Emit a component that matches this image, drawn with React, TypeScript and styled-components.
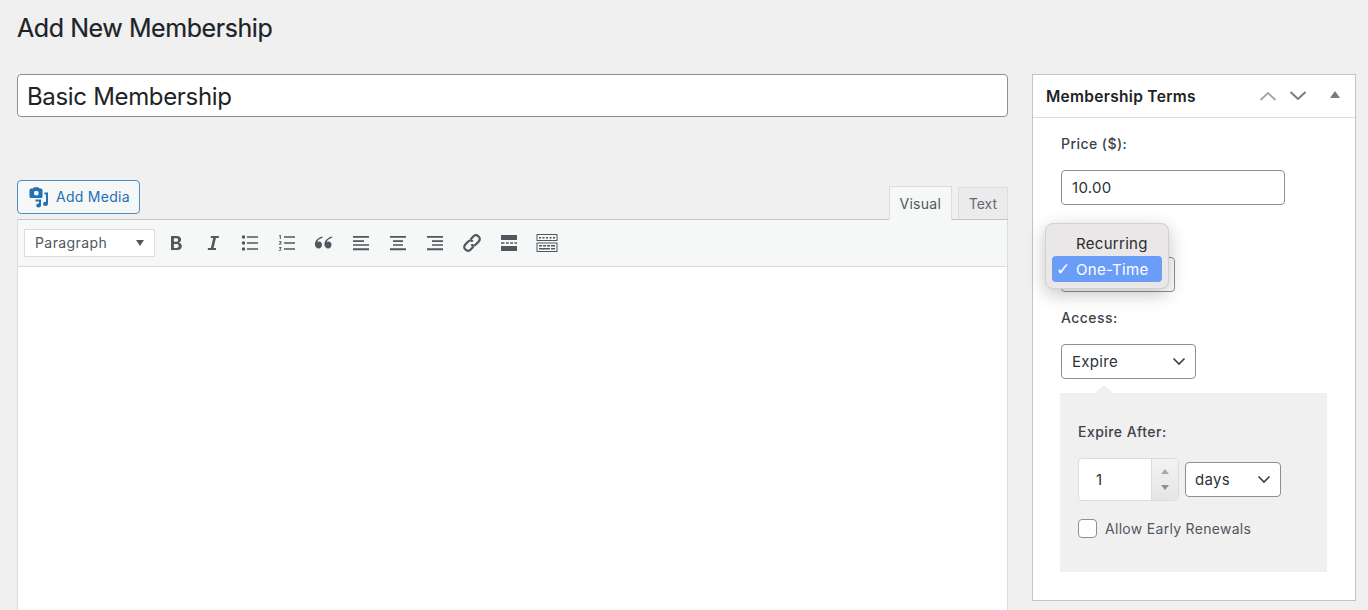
import styled, { createGlobalStyle } from "styled-components";

const GlobalStyle = createGlobalStyle`
  html, body {
    margin: 0;
    padding: 0;
    height: 610px;
    overflow: hidden;
    background: #f0f0f1;
    font-family: Inter, "Liberation Sans", sans-serif;
    color: #1d2327;
  }
  * { box-sizing: border-box; }
`;

function MediaIcon() {
  return (
    <svg width="21" height="21" viewBox="0 0 21 21" fill="#2271b1">
      <path d="M3 1.500h2l1-1.200h4.500l1 1.200h1.500a1.500 1.500 0 0 1 1.500 1.500v6.500a1.500 1.500 0 0 1-1.500 1.500H3A1.500 1.500 0 0 1 1.500 9.500V3A1.500 1.500 0 0 1 3 1.500zM8.300 3.800a2.400 2.400 0 1 0 0 4.800a2.400 2.400 0 0 0 0-4.800z" />
      <path d="M16.500 5.500h3.500v11.200a2.500 2.200 0 0 1-5 0a2.500 2.200 0 0 1 3-1.900V7.500h-1.500z" />
      <path d="M7.500 12.500h5.500v6a2.400 2.100 0 0 1-4.800 0a2.400 2.100 0 0 1 2.800-1.900v-2.100H7.500z" />
    </svg>
  );
}

const toolIcons: { name: string; width: number; body: React.ReactNode }[] = [
  {
    name: "bold",
    width: 20,
    body: (
      <path d="M5 3h5.800c2.700 0 4.300 1.300 4.300 3.600c0 1.500-.8 2.600-2 3v.1c1.600.3 2.700 1.600 2.700 3.400c0 2.500-1.800 3.900-4.700 3.900H5zm2.900 2.300v3.500h2.200c1.300 0 2.100-.6 2.100-1.800s-.8-1.700-2.100-1.700zm0 5.700v3.900h2.500c1.500 0 2.300-.7 2.300-2s-.9-1.900-2.400-1.900z" />
    ),
  },
  {
    name: "italic",
    width: 20,
    body: <path d="M8 3h8l-.4 1.900h-2.700l-2.300 10.200h2.600L12.800 17H4.600l.4-1.900h2.900l2.300-10.200H7.600z" />,
  },
  {
    name: "bullist",
    width: 20,
    body: (
      <>
        <circle cx="3.500" cy="4" r="1.700" />
        <circle cx="3.500" cy="10" r="1.700" />
        <circle cx="3.500" cy="16" r="1.700" />
        <path d="M7 3.200h11v1.500H7zM7 9.200h11v1.500H7zM7 15.200h11v1.500H7z" />
      </>
    ),
  },
  {
    name: "numlist",
    width: 20,
    body: (
      <>
        <path d="M7 3.200h11v1.500H7zM7 9.200h11v1.500H7zM7 15.200h11v1.500H7z" />
        <path d="M2.600 2h1.200v4H2.800V3.100l-.6.200V2.500zM1.800 8.400c.9-.7 2.800-.7 2.800.6c0 .8-.7 1.200-1.500 1.800h1.500v.8H1.800v-.7c1-.9 1.800-1.300 1.800-1.800s-1-.4-1.600 0zM1.900 14.100h2.600v.6l-.9.8c1.500.3 1.200 3-1.900 2.100v-.8c1.200.5 1.900.2 1.900-.3s-.5-.5-1.100-.5v-.6l.8-.6H1.900z" />
      </>
    ),
  },
  {
    name: "blockquote",
    width: 20,
    body: (
      <path d="M9 4.500C5.500 5.800 3.500 7 3.300 9.200c.5-.4 1.100-.6 1.800-.6c1.700 0 2.900 1.300 2.900 3.100S6.700 15.500 4.800 15.500C2.500 15.500.9 13.800.9 11.200C.9 7.600 4 5 8 3.500zM18.500 4.500c-3.500 1.300-5.500 2.500-5.700 4.700c.5-.4 1.100-.6 1.800-.6c1.700 0 2.900 1.300 2.900 3.100s-1.300 3.800-3.200 3.800c-2.300 0-3.900-1.700-3.900-4.300c0-3.600 3.100-6.200 7.100-7.700z" />
    ),
  },
  {
    name: "alignleft",
    width: 20,
    body: <path d="M2 3h16v1.800H2zM2 7.300h11v1.600H2zM2 11.200h16v1.600H2zM2 15.300h16v2H2z" />,
  },
  {
    name: "aligncenter",
    width: 20,
    body: <path d="M2 3h16v1.800H2zM5 7.300h10v1.600H5zM5 11.200h10v1.600H5zM2 15.300h16v2H2z" />,
  },
  {
    name: "alignright",
    width: 20,
    body: <path d="M2 3h16v1.800H2zM7 7.300h11v1.600H7zM7 11.200h11v1.600H7zM2 15.300h16v2H2z" />,
  },
  {
    name: "link",
    width: 20,
    body: (
      <g fill="none" stroke="currentColor" strokeWidth="2.200">
        <path d="M8.500 6.500l3-3.200a3.200 3.200 0 0 1 4.700-.1l.6.600a3.200 3.200 0 0 1 0 4.600l-3 3.100a3.200 3.200 0 0 1-4.600 0" />
        <path d="M11.500 13.500l-3 3.200a3.200 3.200 0 0 1-4.700.1l-.6-.6a3.200 3.200 0 0 1 0-4.600l3-3.100a3.200 3.200 0 0 1 4.600 0" />
      </g>
    ),
  },
  {
    name: "more",
    width: 20,
    body: (
      <path d="M2 2h16v5H2zM2 9.200h3.500v1.600H2zM7 9.200h2.800v1.600H7zM11.200 9.200H14v1.600h-2.800zM15.500 9.200H18v1.600h-2.500zM2 13h16v5H2z" />
    ),
  },
  {
    name: "toolbar",
    width: 22,
    body: (
      <>
        <path
          fillRule="evenodd"
          d="M.5 1h21v7h-21zM1.500 2v5h19V2zM.5 9.500h21V19h-21zM1.500 10.500V18h19v-7.500z"
        />
        <path d="M3 4h2v1.500H3zM6.500 4h2v1.500h-2zM10 4h2v1.500h-2zM13.500 4h2v1.500h-2zM17 4h2v1.500h-2zM3 12h3v1.500H3zM7 12h3v1.500H7zM11 12h3v1.500h-3zM15 12h4v1.500h-4zM3 15h11v1.500H3zM15 15h4v1.500h-4z" />
      </>
    ),
  },
];

function Chevron() {
  return (
    <svg width="14" height="9" viewBox="0 0 14 9" fill="none" stroke="#3c434a" strokeWidth="1.700">
      <path d="M1.500 1.500L7 7l5.500-5.500" />
    </svg>
  );
}

export default function App() {
  return (
    <>
      <GlobalStyle />
      <Page>
        <Heading>Add New Membership</Heading>
        <Columns>
          <Main>
            <TitleInput>Basic Membership</TitleInput>
            <EditorTop>
              <MediaButton>
                <MediaIcon />
                <MediaLabel>Add Media</MediaLabel>
              </MediaButton>
              <Tabs>
                <Tab active>Visual</Tab>
                <Tab>Text</Tab>
              </Tabs>
            </EditorTop>
            <Editor>
              <Toolbar>
                <FormatSelect>
                  <FormatLabel>Paragraph</FormatLabel>
                  <Caret />
                </FormatSelect>
                <ToolIcons>
                  {toolIcons.map((icon) => (
                    <svg
                      key={icon.name}
                      width={icon.width + 2}
                      height="20"
                      viewBox={`0 0 ${icon.width} 20`}
                      fill="currentColor"
                    >
                      {icon.body}
                    </svg>
                  ))}
                </ToolIcons>
              </Toolbar>
              <EditorBody />
            </Editor>
          </Main>

          <Panel>
            <PanelHeader>
              <PanelTitle>Membership Terms</PanelTitle>
              <HeaderIcons>
                <svg width="18" height="10" viewBox="0 0 18 10" fill="none" stroke="#a7aaad" strokeWidth="2">
                  <path d="M1.500 9L9 2l7.500 7" />
                </svg>
                <svg width="18" height="10" viewBox="0 0 18 10" fill="none" stroke="#787c82" strokeWidth="2">
                  <path d="M1.500 1L9 8l7.500-7" />
                </svg>
                <CollapseArrow />
              </HeaderIcons>
            </PanelHeader>
            <PanelBody>
              <Label>Price ($):</Label>
              <PriceInput>10.00</PriceInput>
              <BillingRow>
                <BillingSelect />
                <PopupMenu>
                  <MenuItem>Recurring</MenuItem>
                  <MenuItem selected>
                    <Check>✓</Check>
                    One-Time
                  </MenuItem>
                </PopupMenu>
              </BillingRow>
              <AccessLabel>Access:</AccessLabel>
              <AccessSelect>
                Expire
                <Chevron />
              </AccessSelect>
              <ExpireBox>
                <Label>Expire After:</Label>
                <ExpireRow>
                  <NumberField>
                    <NumberValue>1</NumberValue>
                    <Spinner>
                      <SpinUp />
                      <SpinDown />
                    </Spinner>
                  </NumberField>
                  <DaysSelect>
                    days
                    <Chevron />
                  </DaysSelect>
                </ExpireRow>
                <CheckRow>
                  <CheckBox />
                  Allow Early Renewals
                </CheckRow>
              </ExpireBox>
            </PanelBody>
          </Panel>
        </Columns>
      </Page>
    </>
  );
}

const Page = styled.div`
  height: 610px;
  padding: 13px 12px 0 17px;
  overflow: hidden;
`;

const Heading = styled.h1`
  margin: 0;
  height: 30px;
  font-size: 25px;
  line-height: 30px;
  font-weight: 400;
  color: #1d2327;
  letter-spacing: -0.43px;
  -webkit-text-stroke: 0.2px #1d2327;
`;

const Columns = styled.div`
  display: grid;
  grid-template-columns: 991px 324px;
  gap: 24px;
  margin-top: 31px;
  align-items: start;
`;

const Main = styled.div`
  display: flex;
  flex-direction: column;
`;

const TitleInput = styled.div`
  height: 43px;
  padding: 2px 9px 0;
  display: flex;
  align-items: center;
  background: #fff;
  border: 1px solid #8c8f94;
  border-radius: 4px;
  font-size: 24px;
  color: #1d2327;
  letter-spacing: -0.33px;
`;

const EditorTop = styled.div`
  display: flex;
  justify-content: space-between;
  align-items: flex-end;
  margin-top: 63px;
`;

const MediaButton = styled.div`
  width: 123px;
  height: 34px;
  margin-bottom: 5px;
  padding-left: 10px;
  display: flex;
  align-items: center;
  gap: 7px;
  background: #f6f7f7;
  border: 1px solid #4f8dc0;
  border-radius: 4px;
  font-size: 14px;
  color: #2271b1;
`;

const MediaLabel = styled.span`
  letter-spacing: 0.28px;
  margin-bottom: 1px;
`;

const Tabs = styled.div`
  display: flex;
  align-items: flex-end;
  gap: 6px;
  margin-bottom: -1px;
  position: relative;
  z-index: 1;
`;

const Tab = styled.div<{ active?: boolean }>`
  height: ${(props) => (props.active ? "34px" : "33px")};
  padding: 0 ${(props) => (props.active ? "9.5px" : "10px")};
  display: flex;
  align-items: center;
  font-size: 14px;
  letter-spacing: ${(props) => (props.active ? "0.3px" : "0")};
  color: ${(props) => (props.active ? "#50575e" : "#646970")};
  background: ${(props) => (props.active ? "#f6f7f7" : "#ebebec")};
  border: 1px solid #dcdcde;
  border-bottom: ${(props) => (props.active ? "1px solid #f6f7f7" : "1px solid #c3c4c7")};
`;

const Editor = styled.div`
  border: 1px solid #dcdcde;
  border-top: 1px solid #c3c4c7;
  background: #fff;
`;

const Toolbar = styled.div`
  height: 47px;
  padding-left: 6px;
  display: flex;
  align-items: center;
  background: #f6f7f7;
  border-bottom: 1px solid #dcdcde;
`;

const FormatSelect = styled.div`
  width: 131px;
  height: 28px;
  padding: 0 10px;
  display: flex;
  align-items: center;
  justify-content: space-between;
  background: #fff;
  border: 1px solid #dcdcde;
  font-size: 14px;
  color: #50575e;
`;

const FormatLabel = styled.span`
  letter-spacing: 0.42px;
  margin-bottom: 2px;
`;

const Caret = styled.span`
  width: 0;
  height: 0;
  border-left: 4.5px solid transparent;
  border-right: 4.5px solid transparent;
  border-top: 6px solid #50575e;
`;

const ToolIcons = styled.div`
  display: flex;
  align-items: center;
  gap: 15px;
  margin-left: 10px;
  color: #50575e;
`;

const EditorBody = styled.div`
  height: 400px;
`;

const Panel = styled.section`
  height: 527px;
  background: #fff;
  border: 1px solid #c3c4c7;
`;

const PanelHeader = styled.div`
  height: 43px;
  padding: 0 14px 0 13px;
  display: flex;
  align-items: center;
  justify-content: space-between;
  border-bottom: 1px solid #dcdcde;
`;

const PanelTitle = styled.h2`
  margin: 0;
  font-size: 15.5px;
  font-weight: 600;
  letter-spacing: 0.3px;
  color: #1d2327;
`;

const HeaderIcons = styled.div`
  display: flex;
  align-items: center;
  gap: 12px;
`;

const CollapseArrow = styled.span`
  width: 0;
  height: 0;
  margin: 0 1px 3px 11px;
  border-left: 5px solid transparent;
  border-right: 5px solid transparent;
  border-bottom: 7px solid #787c82;
`;

const PanelBody = styled.div`
  padding: 17px 28px 0 28px;
  display: flex;
  flex-direction: column;
  align-items: flex-start;
`;

const Label = styled.div`
  font-size: 14px;
  line-height: 18px;
  font-weight: 500;
  letter-spacing: 0.45px;
  color: #3c434a;
`;

const fieldCss = `
  background: #fff;
  border: 1px solid #8c8f94;
  border-radius: 4px;
  font-size: 15px;
  letter-spacing: 0.3px;
  color: #2c3338;
  display: flex;
  align-items: center;
`;

const PriceInput = styled.div`
  ${fieldCss}
  width: 224px;
  height: 35px;
  margin-top: 17px;
  padding: 0 10px;
`;

const BillingRow = styled.div`
  position: relative;
  height: 35px;
  margin-top: 52px;
  align-self: stretch;
`;

const BillingSelect = styled.div`
  ${fieldCss}
  width: 114px;
  height: 35px;
`;

const PopupMenu = styled.div`
  position: absolute;
  left: -16px;
  top: -34px;
  width: 124px;
  height: 66px;
  padding: 6px;
  display: flex;
  flex-direction: column;
  justify-content: flex-end;
  background: #e9e7e7;
  border: 1px solid #d2d0d0;
  border-radius: 8px;
  box-shadow: 0 5px 18px rgba(0, 0, 0, 0.24);
`;

const MenuItem = styled.div<{ selected?: boolean }>`
  position: relative;
  height: 26px;
  flex: none;
  padding-left: 24px;
  display: flex;
  align-items: center;
  font-size: 15px;
  letter-spacing: 0.3px;
  border-radius: 4px;
  color: ${(props) => (props.selected ? "#fff" : "#2c2c2c")};
  background: ${(props) => (props.selected ? "#6a9df8" : "transparent")};
`;

const Check = styled.span`
  position: absolute;
  left: 4px;
  font-size: 17px;
  font-family: "DejaVu Sans", sans-serif;
`;

const AccessLabel = styled(Label)`
  margin-top: 17px;
`;

const AccessSelect = styled.div`
  ${fieldCss}
  width: 135px;
  height: 35px;
  margin-top: 17px;
  padding: 0 9px 0 10px;
  justify-content: space-between;
`;

const ExpireBox = styled.div`
  position: relative;
  width: 267px;
  height: 179px;
  margin: 14px 0 0 -1px;
  padding: 30px 18px 0;
  background: #f0f0f1;

  &::before {
    content: "";
    position: absolute;
    top: -8px;
    left: 35px;
    border-left: 9px solid transparent;
    border-right: 9px solid transparent;
    border-bottom: 8px solid #f0f0f1;
  }
`;

const ExpireRow = styled.div`
  display: flex;
  align-items: center;
  gap: 6px;
  margin-top: 17px;
`;

const NumberField = styled.div`
  width: 101px;
  height: 43px;
  display: flex;
  background: #fff;
  border: 1px solid #dcdcde;
  border-radius: 4px;
  overflow: hidden;
`;

const NumberValue = styled.div`
  flex: 1;
  padding-left: 17px;
  display: flex;
  align-items: center;
  font-size: 15px;
  color: #2c3338;
`;

const Spinner = styled.div`
  width: 27px;
  display: flex;
  flex-direction: column;
  align-items: center;
  justify-content: center;
  gap: 11px;
  background: linear-gradient(#f2f2f2, #e6e6e6);
  border-left: 1px solid #dcdcde;
`;

const SpinUp = styled.span`
  border-left: 4.5px solid transparent;
  border-right: 4.5px solid transparent;
  border-bottom: 5px solid #a7aaad;
`;

const SpinDown = styled.span`
  border-left: 4.5px solid transparent;
  border-right: 4.5px solid transparent;
  border-top: 5px solid #8c8f94;
`;

const DaysSelect = styled.div`
  ${fieldCss}
  width: 96px;
  height: 35px;
  padding: 0 9px;
  justify-content: space-between;
`;

const CheckRow = styled.div`
  display: flex;
  align-items: center;
  gap: 8px;
  margin-top: 18px;
  font-size: 14px;
  letter-spacing: 0.3px;
  color: #50575e;
`;

const CheckBox = styled.span`
  width: 19px;
  height: 19px;
  background: #fff;
  border: 1px solid #8c8f94;
  border-radius: 4px;
`;
